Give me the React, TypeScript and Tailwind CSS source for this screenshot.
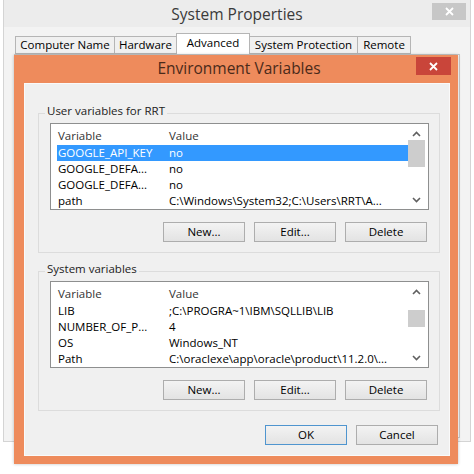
import React from "react";

const font = { fontFamily: '"Open Sans", "Noto Sans", sans-serif' };

const Chevron = ({ up }: { up?: boolean }) => (
  <svg width="9" height="6" viewBox="0 0 9 6" className="block">
    <polyline
      points={up ? "1,5 4.5,1.5 8,5" : "1,1 4.5,4.5 8,1"}
      fill="none"
      stroke="#606060"
      strokeWidth="1.6"
    />
  </svg>
);

const WinButton = ({ label, primary }: { label: string; primary?: boolean }) => (
  <div
    className={
      "w-[82px] h-[20px] flex items-center justify-center text-[11.5px] text-black border bg-gradient-to-b from-[#f3f3f3] to-[#e3e3e3] " +
      (primary ? "border-[#4f95cf]" : "border-[#adadad]")
    }
  >
    {label}
  </div>
);

type Row = { name: string; value: string; selected?: boolean };

const VarList = ({
  rows,
  thumbTop,
  thumbHeight,
}: {
  rows: Row[];
  thumbTop: number;
  thumbHeight: number;
}) => (
  <div className="ml-[11px] w-[379px] h-[87px] border border-[#8e8f8f] bg-white flex overflow-hidden">
    <div className="flex-1 flex flex-col pl-[6px]">
      <div className="h-[25px] flex items-end pb-[1px] text-[11.5px] text-[#333]">
        <span className="w-[112px] pl-[1px]">Variable</span>
        <span>Value</span>
      </div>
      {rows.map((r, i) => (
        <div
          key={i}
          className={
            "h-[16px] flex items-center text-[11.5px] whitespace-nowrap " +
            (r.selected ? "bg-[#3399ff] text-white" : "text-black")
          }
        >
          <span className="w-[112px] pl-[1px]">{r.name}</span>
          <span>{r.value}</span>
        </div>
      ))}
    </div>
    <div className="w-[20px] flex flex-col items-center pr-[3px] pt-[7px] pb-[6px]">
      <Chevron up />
      <div className="flex-1 w-full relative">
        <div
          className="absolute left-0 right-0 bg-[#cdcdcd]"
          style={{ top: thumbTop, height: thumbHeight }}
        />
      </div>
      <Chevron />
    </div>
  </div>
);

const GroupBox = ({
  title,
  rows,
  thumbTop,
  thumbHeight,
}: {
  title: string;
  rows: Row[];
  thumbTop: number;
  thumbHeight: number;
}) => (
  <div className="relative ml-[13px] w-[402px] border border-[#dcdcdc] pt-[9px] pb-[10px]">
    <span className="absolute left-[6px] top-[-12px] px-[2px] bg-[#f0f0f0] text-[11.5px] text-[#222]">
      {title}
    </span>
    <VarList rows={rows} thumbTop={thumbTop} thumbHeight={thumbHeight} />
    <div className="flex justify-end gap-[9px] pr-[12px] mt-[12px]">
      <WinButton label="New..." />
      <WinButton label="Edit..." />
      <WinButton label="Delete" />
    </div>
  </div>
);

const tabs = [
  { label: "Computer Name", w: "w-[100px]" },
  { label: "Hardware", w: "w-[63px]" },
  { label: "Advanced", w: "w-[74px]" },
  { label: "System Protection", w: "w-[109px]" },
  { label: "Remote", w: "w-[54px]" },
];

export default function App() {
  const userRows: Row[] = [
    { name: "GOOGLE_API_KEY", value: "no", selected: true },
    { name: "GOOGLE_DEFA...", value: "no" },
    { name: "GOOGLE_DEFA...", value: "no" },
    { name: "path", value: "C:\\Windows\\System32;C:\\Users\\RRT\\A..." },
  ];
  const sysRows: Row[] = [
    { name: "LIB", value: ";C:\\PROGRA~1\\IBM\\SQLLIB\\LIB" },
    { name: "NUMBER_OF_P...", value: "4" },
    { name: "OS", value: "Windows_NT" },
    { name: "Path", value: "C:\\oraclexe\\app\\oracle\\product\\11.2.0\\..." },
  ];

  return (
    <div className="relative w-[474px] h-[474px] bg-white overflow-hidden" style={font}>
      {/* System Properties window */}
      <div className="absolute left-[3px] top-0 w-[468px] h-[442px] bg-[#f3f3f3] border-l border-r border-b border-[#d4d4d4] flex flex-col">
        <div className="h-[27px] bg-[#ececec] flex items-center justify-center relative">
          <span className="text-[15.5px] text-[#3a3a3a] pt-[2px]">System Properties</span>
          <div className="absolute right-[4px] top-[3px] w-[34px] h-[17px] bg-[#c7c7c7] flex items-center justify-center">
            <svg width="9" height="9" viewBox="0 0 9 9">
              <path d="M1 1 L8 8 M8 1 L1 8" stroke="white" strokeWidth="1.8" />
            </svg>
          </div>
        </div>
        <div className="flex items-end pl-[11px] mt-[6px] h-[21px]">
          {tabs.map((t) => (
            <div
              key={t.label}
              className={
                t.w +
                " text-[11.5px] text-black border border-[#b5b5b5] -mr-px flex items-center justify-center " +
                (t.label === "Advanced"
                  ? "h-[21px] bg-white border-b-0 pb-[3px]"
                  : "h-[18px] bg-[#f0f0f0]")
              }
            >
              {t.label}
            </div>
          ))}
        </div>
        <div className="ml-[10px] mr-[10px] flex-1 border border-[#c9c9c9] bg-white mb-[3px]" />
      </div>

      {/* Environment Variables dialog */}
      <div className="absolute left-[14px] top-[55px] w-[444px] h-[409px] bg-[#ee8b5c] flex flex-col pl-[10px] pr-[8px] pb-[8px] shadow-[0_0_3px_rgba(0,0,0,0.25)]">
        <div className="h-[28px] flex items-center justify-center relative">
          <span className="text-[15.5px] text-[#4a2a1a] pl-[4px]">Environment Variables</span>
          <div className="absolute right-[-1px] top-[2px] w-[35px] h-[18px] bg-[#c9453a] flex items-center justify-center">
            <svg width="9" height="9" viewBox="0 0 9 9">
              <path d="M1 1 L8 8 M8 1 L1 8" stroke="white" strokeWidth="1.8" />
            </svg>
          </div>
        </div>
        <div className="flex-1 bg-[#f0f0f0] border border-[#fafafa] flex flex-col pt-[29px]">
          <GroupBox title="User variables for RRT" rows={userRows} thumbTop={3} thumbHeight={27} />
          <div className="h-[18px]" />
          <GroupBox title="System variables" rows={sysRows} thumbTop={15} thumbHeight={17} />
          <div className="flex justify-end gap-[9px] pr-[11px] mt-[14px]">
            <WinButton label="OK" primary />
            <WinButton label="Cancel" />
          </div>
        </div>
      </div>
    </div>
  );
}
